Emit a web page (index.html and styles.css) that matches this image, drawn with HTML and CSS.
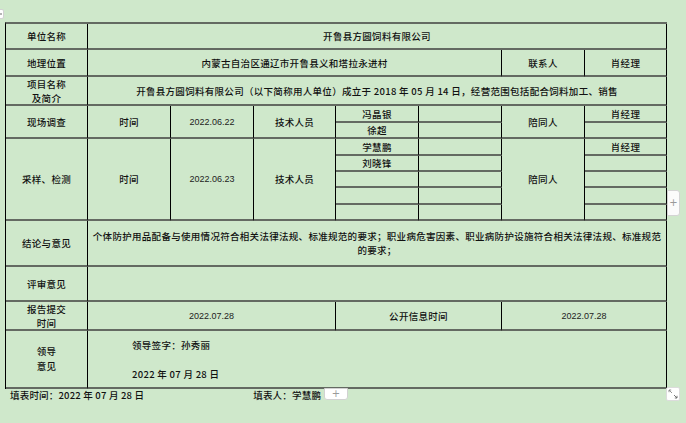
FILE: index.html
```html
<!DOCTYPE html>
<html lang="zh-CN">
<head>
<meta charset="utf-8">
<title>开鲁县方圆饲料有限公司</title>
<link rel="stylesheet" href="styles.css">
</head>
<body>
<div class="page">
  <span class="corner-tab"></span>
  <div class="sheet">
    <div class="cell">单位名称</div>
    <div class="cell c7">开鲁县方圆饲料有限公司</div>

    <div class="cell">地理位置</div>
    <div class="cell c5">内蒙古自治区通辽市开鲁县义和塔拉永进村</div>
    <div class="cell">联系人</div>
    <div class="cell">肖经理</div>

    <div class="cell">项目名称<br>及简介</div>
    <div class="cell c7">开鲁县方圆饲料有限公司（以下简称用人单位）成立于 2018 年 05 月 14 日，经营范围包括配合饲料加工、销售</div>

    <div class="cell r2">现场调查</div>
    <div class="cell r2">时间</div>
    <div class="cell r2 num">2022.06.22</div>
    <div class="cell r2">技术人员</div>
    <div class="cell">冯晶银</div>
    <div class="cell"></div>
    <div class="cell r2">陪同人</div>
    <div class="cell">肖经理</div>
    <div class="cell">徐超</div>
    <div class="cell"></div>
    <div class="cell"></div>

    <div class="cell r5">采样、检测</div>
    <div class="cell r5">时间</div>
    <div class="cell r5 num">2022.06.23</div>
    <div class="cell r5">技术人员</div>
    <div class="cell">学慧鹏</div>
    <div class="cell"></div>
    <div class="cell r5">陪同人</div>
    <div class="cell">肖经理</div>
    <div class="cell">刘晓锋</div>
    <div class="cell"></div>
    <div class="cell"></div>
    <div class="cell"></div>
    <div class="cell"></div>
    <div class="cell"></div>
    <div class="cell"></div>
    <div class="cell"></div>
    <div class="cell"></div>
    <div class="cell"></div>
    <div class="cell"></div>
    <div class="cell"></div>

    <div class="cell">结论与意见</div>
    <div class="cell c7">个体防护用品配备与使用情况符合相关法律法规、标准规范的要求；职业病危害因素、职业病防护设施符合相关法律法规、标准规范<br>的要求；</div>

    <div class="cell">评审意见</div>
    <div class="cell c7"></div>

    <div class="cell">报告提交<br>时间</div>
    <div class="cell c3 num">2022.07.28</div>
    <div class="cell c2">公开信息时间</div>
    <div class="cell c2 num">2022.07.28</div>

    <div class="cell tall">领导<br>意见</div>
    <div class="cell c7 sign">
      <p>领导签字：孙秀丽</p>
      <p>2022 年 07 月 28 日</p>
    </div>
  </div>

  <div class="footer">
    <span class="fill-time">填表时间：2022 年 07 月 28 日</span>
    <span class="filler">填表人：学慧鹏</span>
    <span class="add-btn">+</span>
  </div>

  <span class="side-tab">+</span>
  <span class="resize">
    <svg width="12" height="12" viewBox="0 0 12 12">
      <path d="M2 2 L5 5 M2 2 L2 4.2 M2 2 L4.2 2" stroke="#888" stroke-width="0.9" fill="none"/>
      <path d="M10 10 L7 7 M10 10 L10 7.8 M10 10 L7.8 10" stroke="#666" stroke-width="0.9" fill="none"/>
    </svg>
  </span>
</div>
</body>
</html>
```

FILE: styles.css
```css
* {
  box-sizing: border-box;
  margin: 0;
  padding: 0;
}

html,
body {
  background: #cfe8cb;
}

body {
  width: 686px;
  height: 423px;
  overflow: hidden;
  font-family: "Noto Sans CJK SC", "Noto Sans", sans-serif;
  font-size: 9.5px;
  font-weight: 500;
  color: #111;
}

.page {
  position: relative;
  width: 686px;
  height: 423px;
  padding: 22px 0 0 5px;
}

.sheet {
  display: grid;
  width: 662px;
  grid-template-columns: 82px 83px 83px 82px 83px 83px 83px 82px;
  grid-template-rows: 26px 27px 29px 17px 16px 17px 16px 16px 17px 16px 46px 35px 29px 58px;
  border-top: 2px solid #646a62;
  border-left: 1px solid #000;
}

.cell {
  display: flex;
  align-items: center;
  justify-content: center;
  text-align: center;
  line-height: 14px;
  letter-spacing: 0.3px;
  white-space: nowrap;
  border-right: 1px solid #000;
  border-bottom: 2px solid #646a62;
}

.c2 { grid-column: span 2; }
.c3 { grid-column: span 3; }
.c5 { grid-column: span 5; }
.c7 { grid-column: span 7; }
.r2 { grid-row: span 2; }
.r5 { grid-row: span 5; }

.num {
  font-family: "Liberation Sans", Arial, sans-serif;
  font-size: 9px;
  font-weight: 400;
  letter-spacing: 0;
  color: #222;
}

.tall {
  line-height: 15px;
}

.sign {
  flex-direction: column;
  align-items: flex-start;
  justify-content: center;
  gap: 15px;
  padding-left: 44px;
  text-align: left;
}

.footer {
  display: flex;
  align-items: flex-start;
  height: 14px;
  padding-left: 5px;
  line-height: 12px;
  letter-spacing: 0.2px;
  color: #111;
}

.filler {
  margin-left: 109px;
}

.add-btn {
  width: 24px;
  height: 12px;
  margin: -1px 0 0 3px;
  background: #fff;
  border: 1px solid #d2d2d2;
  border-radius: 0 0 3px 3px;
  color: #9a9a9a;
  font-family: "DejaVu Sans", sans-serif;
  font-size: 10px;
  font-weight: 400;
  line-height: 10px;
  text-align: center;
}

.corner-tab {
  position: absolute;
  left: -9px;
  top: 9px;
  width: 13px;
  height: 10px;
  background: #fff;
  border: 1px solid #d2d2d2;
  border-radius: 0 2px 2px 0;
}

.corner-tab::after {
  content: "";
  position: absolute;
  left: 8px;
  top: 3px;
  width: 2px;
  height: 2px;
  background: #b5b5b5;
}

.side-tab {
  position: absolute;
  left: 667px;
  top: 190px;
  width: 13px;
  height: 26px;
  background: #fbfbfb;
  border: 1px solid #d4d4d4;
  border-radius: 0 3px 3px 0;
  color: #999;
  font-family: "DejaVu Sans", sans-serif;
  font-size: 10px;
  font-weight: 400;
  line-height: 24px;
  text-align: center;
}

.resize {
  position: absolute;
  left: 666px;
  top: 387px;
  width: 14px;
  height: 14px;
  display: flex;
  align-items: center;
  justify-content: center;
  background: #fff;
  border: 1px solid #dcdcdc;
  border-radius: 2px;
}
```
